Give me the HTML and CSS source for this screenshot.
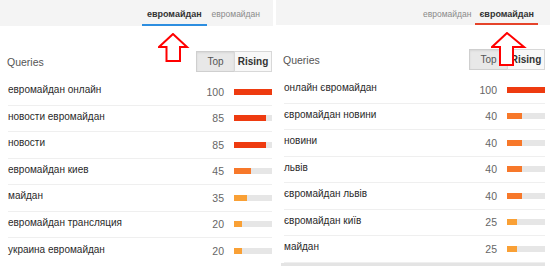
FILE: index.html
```html
<!DOCTYPE html>
<html lang="en">
<head>
    <meta charset="UTF-8">
    <title>Queries</title>
    <link rel="stylesheet" href="styles.css">
</head>
<body>
    <div class="page">
        <div class="panel left">
            <div class="tabs">
                <div class="tab active blue">евромайдан</div>
                <div class="tab">евромайдан</div>
            </div>
            <div class="toolbar">
                <div class="label">Queries</div>
                <div class="switch">
                    <div class="btn on">Top</div>
                    <div class="btn">Rising</div>
                </div>
            </div>
            <div class="rows">
                <div class="row"><span class="q">евромайдан онлайн</span><span class="n">100</span><span class="track"><span class="bar hot" style="width:100%"></span></span></div>
                <div class="row"><span class="q">новости евромайдан</span><span class="n">85</span><span class="track"><span class="bar hot" style="width:85%"></span></span></div>
                <div class="row"><span class="q">новости</span><span class="n">85</span><span class="track"><span class="bar hot" style="width:85%"></span></span></div>
                <div class="row"><span class="q">евромайдан киев</span><span class="n">45</span><span class="track"><span class="bar mid" style="width:45%"></span></span></div>
                <div class="row"><span class="q">майдан</span><span class="n">35</span><span class="track"><span class="bar low" style="width:35%"></span></span></div>
                <div class="row"><span class="q">евромайдан трансляция</span><span class="n">20</span><span class="track"><span class="bar low" style="width:20%"></span></span></div>
                <div class="row last"><span class="q">украина евромайдан</span><span class="n">20</span><span class="track"><span class="bar low" style="width:20%"></span></span></div>
            </div>
        </div>
        <div class="panel right">
            <div class="tabs">
                <div class="tab">евромайдан</div>
                <div class="tab active red">євромайдан</div>
            </div>
            <div class="toolbar">
                <div class="label">Queries</div>
                <div class="switch">
                    <div class="btn on">Top</div>
                    <div class="btn">Rising</div>
                </div>
            </div>
            <div class="rows">
                <div class="row"><span class="q">онлайн євромайдан</span><span class="n">100</span><span class="track"><span class="bar hot" style="width:100%"></span></span></div>
                <div class="row"><span class="q">євромайдан новини</span><span class="n">40</span><span class="track"><span class="bar mid" style="width:40%"></span></span></div>
                <div class="row"><span class="q">новини</span><span class="n">40</span><span class="track"><span class="bar mid" style="width:40%"></span></span></div>
                <div class="row"><span class="q">львів</span><span class="n">40</span><span class="track"><span class="bar mid" style="width:40%"></span></span></div>
                <div class="row"><span class="q">євромайдан львів</span><span class="n">40</span><span class="track"><span class="bar mid" style="width:40%"></span></span></div>
                <div class="row"><span class="q">євромайдан київ</span><span class="n">25</span><span class="track"><span class="bar low" style="width:25%"></span></span></div>
                <div class="row"><span class="q">майдан</span><span class="n">25</span><span class="track"><span class="bar low" style="width:25%"></span></span></div>
            </div>
            <div class="foot"></div>
        </div>
    </div>

    <svg class="arrow arrow-left" width="34" height="34" viewBox="0 0 34 34">
        <polygon points="15,1 1,14 8.5,14 8.5,28 22,28 22,14 29,14" />
    </svg>
    <svg class="arrow arrow-right" width="38" height="40" viewBox="0 0 38 40">
        <polygon points="16,1 1,15 9,15 9,33 22,33 22,15 33,15" />
    </svg>
</body>
</html>
```

FILE: styles.css
```css
* {
    margin: 0;
    padding: 0;
    box-sizing: border-box;
}

body {
    background: #fff;
    font-family: 'Liberation Sans', Arial, sans-serif;
    color: #333;
    position: relative;
    width: 550px;
    height: 270px;
    overflow: hidden;
}

.page {
    display: flex;
    gap: 3px;
}

.panel {
    display: flex;
    flex-direction: column;
}

.panel.left {
    width: 273px;
}

.panel.right {
    width: 274px;
}

.tabs {
    background: #f4f4f4;
    height: 26px;
    display: flex;
    justify-content: flex-end;
    align-items: stretch;
    padding-right: 9px;
}

.panel.right .tabs {
    padding-right: 12px;
    height: 25px;
}

.tab {
    font-size: 8.5px;
    color: #8a8a8a;
    padding: 9px 4px 0;
    border-bottom: 2px solid transparent;
}

.tab.active {
    font-weight: bold;
    font-size: 9px;
    color: #333;
}

.tab.blue {
    border-bottom-color: #2d8ee0;
    padding: 9px 5px 0;
    margin-right: 1px;
}

.tab.red {
    border-bottom-color: #e5432a;
}

.toolbar {
    display: flex;
    justify-content: space-between;
    align-items: center;
    padding: 25px 1px 7px 7px;
}

.panel.right .toolbar {
    padding: 24px 5px 7px 7px;
}

.label {
    font-size: 10.5px;
    color: #555;
}

.switch {
    display: flex;
}

.btn {
    height: 21px;
    width: 38px;
    font-size: 10px;
    font-weight: bold;
    color: #333;
    background: #f8f8f8;
    border: 1px solid #d8d8d8;
    display: flex;
    justify-content: center;
    align-items: center;
}

.btn.on {
    font-weight: normal;
    color: #555;
    background: #e8e8e8;
    border-color: #cfcfcf;
    border-right: none;
    box-shadow: inset 0 1px 2px rgba(0, 0, 0, 0.08);
}

.rows {
    padding-left: 8px;
}

.panel.left .rows {
    padding-right: 1px;
}

.panel.right .rows {
    padding-right: 5px;
}

.row {
    height: 26.5px;
    display: flex;
    align-items: center;
    border-bottom: 1px solid #efefef;
}

.row.last {
    border-bottom: none;
}

.q {
    flex: 1;
    font-size: 10px;
    color: #2a2a2a;
    padding-bottom: 4px;
}

.n {
    font-size: 10.5px;
    color: #666;
    width: 30px;
    text-align: right;
    margin-right: 10px;
}

.track {
    width: 38px;
    height: 6px;
    background: #e6e6e6;
    display: flex;
}

.bar {
    height: 6px;
}

.bar.hot {
    background: #ee3b10;
}

.bar.mid {
    background: #f7782a;
}

.bar.low {
    background: #f9a035;
}

.foot {
    height: 3px;
    background: #e4e4e4;
    margin: 0 5px 0 5px;
}

.arrow {
    position: absolute;
}

.arrow polygon {
    fill: #fff;
    stroke: #f00;
    stroke-width: 2;
    stroke-linejoin: miter;
}

.arrow-left {
    left: 158px;
    top: 33px;
}

.arrow-right {
    left: 491px;
    top: 32px;
}
```
